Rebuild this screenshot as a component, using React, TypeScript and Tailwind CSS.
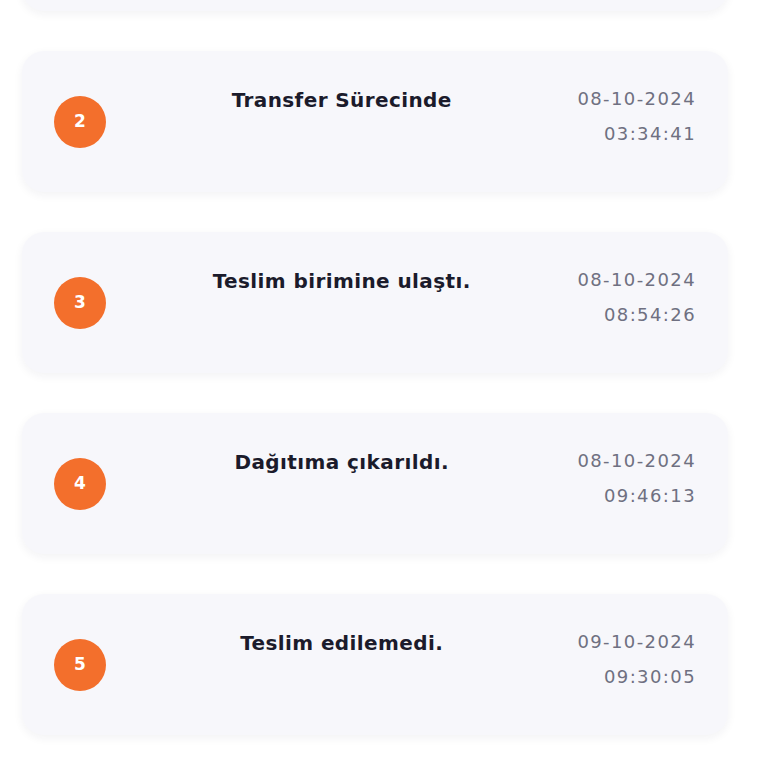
const steps = [
  { no: 1, title: "Gönderi oluşturuldu.", date: "07-10-2024", time: "18:12:09" },
  { no: 2, title: "Transfer Sürecinde", date: "08-10-2024", time: "03:34:41" },
  { no: 3, title: "Teslim birimine ulaştı.", date: "08-10-2024", time: "08:54:26" },
  { no: 4, title: "Dağıtıma çıkarıldı.", date: "08-10-2024", time: "09:46:13" },
  { no: 5, title: "Teslim edilemedi.", date: "09-10-2024", time: "09:30:05" },
];

export default function App() {
  return (
    <div
      className="min-h-screen bg-white overflow-hidden"
      style={{ fontFamily: '"DejaVu Sans", "Noto Sans", sans-serif' }}
    >
      <div className="-mt-[130px] ml-[22px] w-[706px] flex flex-col gap-[40px]">
        {steps.map((s) => (
          <div
            key={s.no}
            className="h-[141px] flex px-8 rounded-[22px] bg-[#f7f7fb] shadow-[0_3px_10px_rgba(30,30,60,0.06)]"
          >
            <div className="self-center w-[52px] h-[52px] rounded-full bg-[#f36f2c] flex items-center justify-center text-white font-bold text-[17px]">
              {s.no}
            </div>
            <div className="flex-1 pt-[35px] text-center text-[20px] leading-[28px] font-bold text-[#1b1b2b] tracking-[0.4px]">
              {s.title}
            </div>
            <div className="pt-[36px] text-right text-[18px] leading-[24px] text-[#6f7081] tracking-[1.4px]">
              <div>{s.date}</div>
              <div className="mt-[11px]">{s.time}</div>
            </div>
          </div>
        ))}
      </div>
    </div>
  );
}
